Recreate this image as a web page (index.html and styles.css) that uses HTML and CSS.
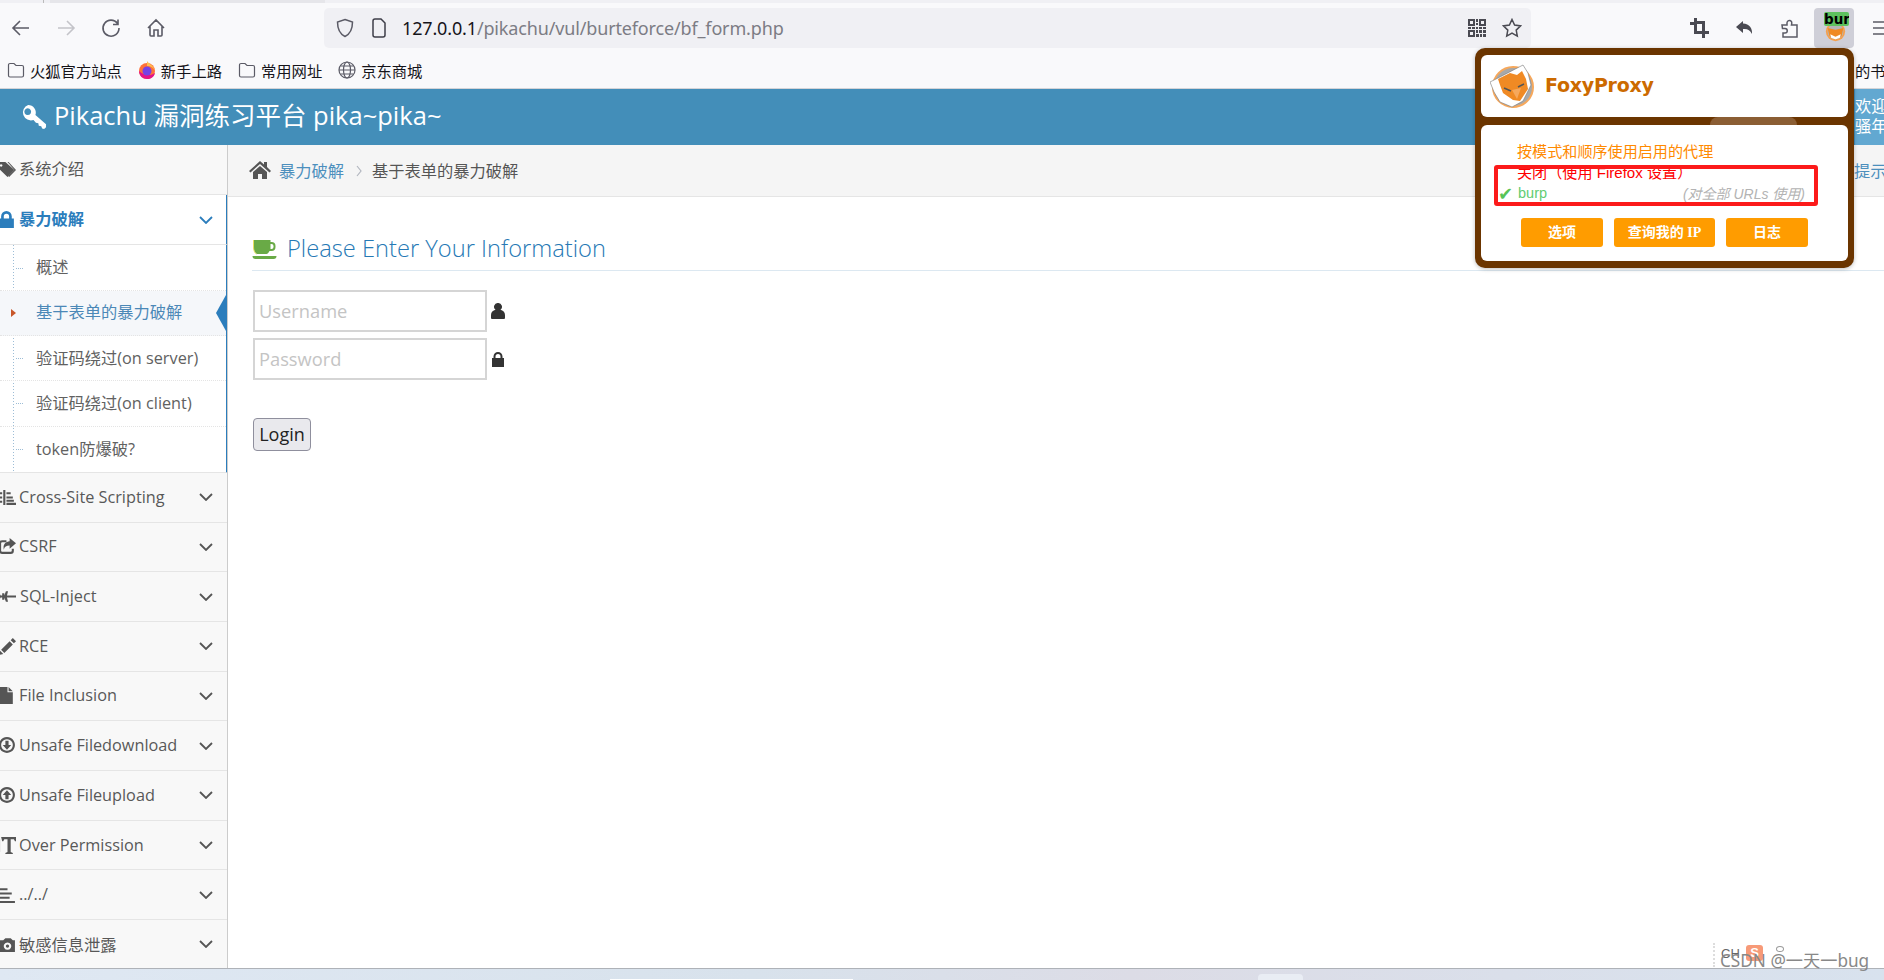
FILE: index.html
```html
<!DOCTYPE html>
<html lang="zh">
<head>
<meta charset="utf-8">
<title>Pikachu</title>
<link rel="stylesheet" href="styles.css">
</head>
<body>
<div class="page">
  <div class="tabstrip"><span class="tab-line"></span><span class="tab-shadow"></span></div>

  <div class="toolbar">
    <svg class="tb-icon" viewBox="0 0 20 20"><path d="M18 10H3M9 3l-7 7 7 7"/></svg>
    <svg class="tb-icon tb-disabled" viewBox="0 0 20 20"><path d="M2 10h15M11 3l7 7-7 7"/></svg>
    <svg class="tb-icon" viewBox="0 0 20 20"><path d="M16.500 5.500A8 8 0 1 0 18 10M17 1.500v5h-5"/></svg>
    <svg class="tb-icon" viewBox="0 0 20 20"><path d="M2 10l8-8 8 8M4 8v9a1 1 0 0 0 1 1h3v-6h4v6h3a1 1 0 0 0 1-1V8"/></svg>
    <div class="urlbar">
      <svg class="url-shield" viewBox="0 0 20 20"><path d="M10 1.500l7.500 2.500c0 7-1.500 11.500-7.500 14.500C4 15.500 2.500 11 2.500 4z"/></svg>
      <svg class="url-page" viewBox="0 0 20 20"><path d="M4 3a2 2 0 0 1 2-2h6l4 4v12a2 2 0 0 1-2 2H6a2 2 0 0 1-2-2z"/></svg>
      <span class="url-text"><b class="url-host">127.0.0.1</b>/pikachu/vul/burteforce/bf_form.php</span>
      <svg class="url-qr" viewBox="0 0 18 18"><path d="M0 0h7v7H0zM2 2v3h3V2zM11 0h7v7h-7zM13 2v3h3V2zM0 11h7v7H0zM2 13v3h3v-3zM8 0h2v3H8zM8 4h2v2H8zM0 8h3v2H0zM4 8h3v2H4zM8 8h2v2H8zM11 8h3v2h-3zM15 8h3v2h-3zM8 11h2v3H8zM11 11h3v3h-3zM15 11h3v3h-3zM8 15h3v3H8zM12 15h2v3h-2zM15 15h3v3h-3z"/></svg>
      <svg class="url-star" viewBox="0 0 20 20"><path d="M10 1.500l2.600 5.600 6 .8-4.400 4.200 1.100 6L10 15.200 4.700 18.100l1.100-6L1.400 7.900l6-.8z"/></svg>
    </div>
    <div class="tb-right">
      <svg class="tb-ext" viewBox="0 0 20 20"><path class="tb-solid" fill-rule="evenodd" d="M4 0h3v3h8v10h4v3h-4v4h-3v-4H4V7H0V4h4zM7 6v7h5V6z"/></svg>
      <svg class="tb-ext" viewBox="0 0 20 20"><path class="tb-solid" d="M8 3L1 9l7 6v-4c4-.5 7 .5 9 5 .5-6-2.500-10-9-10.500z"/></svg>
      <svg class="tb-ext tb-puzzle" viewBox="0 0 20 20"><path d="M2 7h5V5a2.500 2.500 0 0 1 3-2.500C12 3 12 5 11.500 7H17v12H3v-4h2a2.200 2.200 0 0 0 0-4.500H2.500z"/></svg>
      <div class="foxy-btn">
        <svg class="foxy-mini" viewBox="0 0 24 24"><circle cx="12" cy="12" r="11" fill="#f6a04d"/><circle cx="12" cy="12" r="9" fill="#b5b5b5"/><path d="M3 8l9 2 9-2-2 9-7 5-7-5z" fill="#f08a24"/><path d="M6 15l6 3 6-3-1 4-5 2-5-2z" fill="#fff"/></svg>
        <span class="foxy-badge">bur</span>
      </div>
      <svg class="tb-menu" viewBox="0 0 20 20"><path d="M1 4h18M1 10h18M1 16h18"/></svg>
    </div>
  </div>

  <div class="bookmarks">
    <span class="bm"><svg class="bm-icon" viewBox="0 0 18 18"><path d="M1.500 4a1.500 1.500 0 0 1 1.500-1.500h4l2 2h6A1.500 1.500 0 0 1 16.500 6v8.500A1.500 1.500 0 0 1 15 16H3a1.500 1.500 0 0 1-1.500-1.500z"/></svg>火狐官方站点</span>
    <span class="bm"><svg class="bm-icon bm-fx" viewBox="0 0 18 18"><circle cx="9" cy="10" r="8" fill="#ff7139"/><path d="M9 0c2 3 6 4 8 9-2-2-4-4-8-4z" fill="#ffbd4f"/><path d="M1 10c0 5 4 8 8 8s7-2 8-6c-4 3-11 3-16-2z" fill="#e31587"/><circle cx="9" cy="10" r="4.500" fill="#7542e5"/></svg>新手上路</span>
    <span class="bm"><svg class="bm-icon" viewBox="0 0 18 18"><path d="M1.500 4a1.500 1.500 0 0 1 1.500-1.500h4l2 2h6A1.500 1.500 0 0 1 16.500 6v8.500A1.500 1.500 0 0 1 15 16H3a1.500 1.500 0 0 1-1.500-1.500z"/></svg>常用网址</span>
    <span class="bm"><svg class="bm-icon" viewBox="0 0 18 18"><circle cx="9" cy="9" r="8"/><ellipse cx="9" cy="9" rx="3.500" ry="8"/><path d="M1 9h16M2.500 5h13M2.500 13h13"/></svg>京东商城</span>
    <span class="bm-other">的书签</span>
  </div>

  <header class="site-head">
    <svg class="head-key" viewBox="0 0 28 28"><path fill-rule="evenodd" d="M8.500 1a8 8 0 0 1 7.500 10.500L27 21v3l-2 2-2-.5-1-2.500-2.500-.5-.5-2.500-2.500-.5-2.500-3A8 8 0 1 1 8.500 1zM8 4.500a3.500 3.500 0 1 0 .01 0z"/></svg>
    <span class="head-title">Pikachu 漏洞练习平台 pika~pika~</span>
    <div class="head-user">欢迎光临<br>骚年</div>
  </header>

  <div class="main">
    <nav class="sidebar">
      <a class="nav-item nav-first"><svg class="nav-icon" viewBox="0 0 16 16"><path fill-rule="evenodd" d="M-1 1h7l8.500 7.500L8 15-1 6.500zM2 3a1.200 1.200 0 1 0 .01 0z"/><path d="M8 1h1l7 7.500L9.500 15l-.8-.8L14.500 8.500z"/></svg><span class="nav-label">系统介绍</span></a>
      <a class="nav-item nav-first nav-open"><svg class="nav-icon" viewBox="0 0 16 16"><path fill-rule="evenodd" d="M2 7V5a5 5 0 0 1 10 0v2h2v9H0V7zM4.500 7h5V5a2.500 2.500 0 0 0-5 0z"/></svg><span class="nav-label">暴力破解</span><svg class="chev" viewBox="0 0 14 8"><path d="M1 1l6 6 6-6"/></svg></a>
      <ul class="submenu">
        <li class="sub-item">概述</li>
        <li class="sub-item sub-active">基于表单的暴力破解</li>
        <li class="sub-item">验证码绕过(on server)</li>
        <li class="sub-item">验证码绕过(on client)</li>
        <li class="sub-item">token防爆破?</li>
      </ul>
      <a class="nav-item"><svg class="nav-icon" viewBox="0 0 16 16"><path d="M4 1h2v14H4zM0 3h3v2H0zM0 7h3v2H0zM0 11h3v2H0zM7 3h4v2H7zM7 7h6v2H7zM7 13h9v2H7zM7 10h7v2H7z"/></svg><span class="nav-label">Cross-Site Scripting</span><svg class="chev" viewBox="0 0 14 8"><path d="M1 1l6 6 6-6"/></svg></a>
      <a class="nav-item"><svg class="nav-icon" viewBox="0 0 16 16"><path d="M10 0l6 5-6 5V7C7 7 5 8 4.500 11 3.500 6 6 3.500 10 3zM0 5a3 3 0 0 1 3-3h4v2H3a1 1 0 0 0-1 1v7a1 1 0 0 0 1 1h8a1 1 0 0 0 1-1v-2h2v2a3 3 0 0 1-3 3H3a3 3 0 0 1-3-3z"/></svg><span class="nav-label">CSRF</span><svg class="chev" viewBox="0 0 14 8"><path d="M1 1l6 6 6-6"/></svg></a>
      <a class="nav-item nav-sql"><svg class="nav-icon" viewBox="0 0 16 16"><path d="M0 4l1.500 3H5L6.500 3H8.500l-1 4H16v2H7.500l1 4h-2L5 9H1.500L0 12zM3 5h2v6H3z"/></svg><span class="nav-label">SQL-Inject</span><svg class="chev" viewBox="0 0 14 8"><path d="M1 1l6 6 6-6"/></svg></a>
      <a class="nav-item"><svg class="nav-icon" viewBox="0 0 16 16"><path d="M13 0l3 3-2 2-3-3zM10 3l3 3-8 8-3-3zM1 12l3 3-4 1z"/></svg><span class="nav-label">RCE</span><svg class="chev" viewBox="0 0 14 8"><path d="M1 1l6 6 6-6"/></svg></a>
      <a class="nav-item"><svg class="nav-icon" viewBox="0 0 16 16"><path d="M0 0h8v5h5v11H0zM9 0l4 4H9z"/></svg><span class="nav-label">File Inclusion</span><svg class="chev" viewBox="0 0 14 8"><path d="M1 1l6 6 6-6"/></svg></a>
      <a class="nav-item"><svg class="nav-icon" viewBox="0 0 16 16"><path fill-rule="evenodd" d="M7.500 0a7.500 7.500 0 1 1-.01 0zM7.500 2a5.500 5.500 0 1 0 .01 0zM6 3.500h3v4h2.500l-4 4.500-4-4.500H6z"/></svg><span class="nav-label">Unsafe Filedownload</span><svg class="chev" viewBox="0 0 14 8"><path d="M1 1l6 6 6-6"/></svg></a>
      <a class="nav-item"><svg class="nav-icon" viewBox="0 0 16 16"><path fill-rule="evenodd" d="M7.500 0a7.500 7.500 0 1 1-.01 0zM7.500 2a5.500 5.500 0 1 0 .01 0zM6 11.500h3v-4h2.500L7.500 3l-4 4.500H6z"/></svg><span class="nav-label">Unsafe Fileupload</span><svg class="chev" viewBox="0 0 14 8"><path d="M1 1l6 6 6-6"/></svg></a>
      <a class="nav-item"><svg class="nav-icon" viewBox="0 0 16 16"><path d="M2 0h14v4h-1l-1-2h-3v12l2 1v1H6v-1l2-1V2H5L4 4H3zM0 2h1v12H0z"/></svg><span class="nav-label">Over Permission</span><svg class="chev" viewBox="0 0 14 8"><path d="M1 1l6 6 6-6"/></svg></a>
      <a class="nav-item"><svg class="nav-icon" viewBox="0 0 16 16"><path d="M0 2h8v2H0zM0 6h12v2H0zM0 10h10v2H0zM0 14h15v2H0z"/></svg><span class="nav-label">../../</span><svg class="chev" viewBox="0 0 14 8"><path d="M1 1l6 6 6-6"/></svg></a>
      <a class="nav-item"><svg class="nav-icon" viewBox="0 0 16 16"><path fill-rule="evenodd" d="M0 4h4l2-2h5l2 2h2v11H0zM8 6a3.500 3.500 0 1 0 .01 0zM8 8a1.500 1.500 0 1 1-.01 0z"/></svg><span class="nav-label">敏感信息泄露</span><svg class="chev" viewBox="0 0 14 8"><path d="M1 1l6 6 6-6"/></svg></a>
    </nav>

    <section class="content">
      <div class="breadcrumb">
        <svg class="crumb-home" viewBox="0 0 22 18"><path d="M11 0l4 3.500V1h3v5l4 4-1.500 1.500L11 3 1.500 11.500 0 10zM4 11l7-6 7 6v7h-5v-5H9v5H4z"/></svg>
        <a class="crumb-link">暴力破解</a>
        <svg class="crumb-sep" viewBox="0 0 6 12"><path d="M1 1l4 5-4 5"/></svg>
        <span class="crumb-current">基于表单的暴力破解</span>
        <span class="crumb-tip">提示</span>
      </div>
      <div class="form-area">
        <h4 class="form-title">
          <svg class="title-cup" viewBox="0 0 24 20"><path d="M1 0h17v2h1a4 4 0 0 1 4 4v1a4 4 0 0 1-4 4h-2c-1 2-2 3-3 3H5C3 14 1 11 1 7z" fill="#69aa46"/><path d="M18 4v5h1a2 2 0 0 0 2-2V6a2 2 0 0 0-2-2z" fill="#fff"/><path d="M0 16h24c0 2-1 3-3 3H3c-2 0-3-1-3-3z" fill="#69aa46"/><path d="M1 0v7c0 3 1 6 3 7" fill="none" stroke="#e8e060" stroke-width="1"/></svg>
          <span>Please Enter Your Information</span>
        </h4>
        <div class="field"><input class="text-input" type="text" placeholder="Username"><svg class="field-icon" viewBox="0 0 14 16"><path d="M7 0a3.800 3.800 0 0 1 2.500 6.800C12 7.500 14 9 14 12v3a1 1 0 0 1-1 1H1a1 1 0 0 1-1-1v-3c0-3 2-4.500 4.500-5.200A3.800 3.800 0 0 1 7 0z"/></svg></div>
        <div class="field"><input class="text-input" type="password" placeholder="Password"><svg class="field-icon field-lock" viewBox="0 0 12 15"><path fill-rule="evenodd" d="M1.500 6V4.500a4.500 4.500 0 0 1 9 0V6H12v9H0V6zM3.500 6h5V4.500a2.500 2.500 0 0 0-5 0z"/></svg></div>
        <button class="login-btn" type="button">Login</button>
      </div>
    </section>
  </div>

  <div class="taskbar"><span class="task-a"></span><span class="task-b"></span></div>

  <aside class="fp-popup">
    <div class="fp-top">
      <svg class="fp-logo" viewBox="0 0 46 46">
        <circle cx="23" cy="24" r="20" fill="#a8a8a8" stroke="#f6a85c" stroke-width="2"/>
        <path d="M0 19l8-4 25-13 5 8 3 12-8 16-11 6-12-5-6-10z" fill="#fff" stroke="#777" stroke-width=".6"/>
        <path d="M8 16l12-6 7 2 5-4 4 8 2 10-8 12-7-1-10-7-3-8z" fill="#f08a24"/>
        <path d="M14 25l7 3M28 24l6-3" stroke="#555" stroke-width="1.500"/>
        <path d="M22 27l5 9 4-11z" fill="#f6a85c"/>
      </svg>
      <span class="fp-name">FoxyProxy</span>
    </div>
    <div class="fp-body">
      <div class="fp-mode">按模式和顺序使用启用的代理</div>
      <div class="fp-off">关闭（使用 Firefox 设置）</div>
      <div class="fp-proxy"><span class="fp-check">✔</span><span class="fp-burp">burp</span><em class="fp-note">(对全部 URLs 使用)</em></div>
      <div class="fp-actions">
        <span class="fp-btn fp-btn-a">选项</span>
        <span class="fp-btn fp-btn-b">查询我的 IP</span>
        <span class="fp-btn fp-btn-a">日志</span>
      </div>
      <span class="fp-redbox"></span>
    </div>
    <span class="fp-ghost"></span>
  </aside>

  <div class="watermark">
    <span class="wm-dots"></span>
    <span class="wm-ch">CH</span>
    <span class="wm-logo">S</span>
    <span class="wm-ring"></span>
    <span class="wm-text">CSDN @一天一bug</span>
  </div>
</div>
</body>
</html>
```

FILE: styles.css
```css
* { box-sizing: border-box; }
html, body { margin: 0; padding: 0; height: 100%; overflow: hidden; background: #fff; }
body { font-family: "Open Sans", "Noto Sans CJK SC", sans-serif; font-size: 16.25px; color: #393939; }
ul { list-style: none; margin: 0; padding: 0; }
a { text-decoration: none; color: inherit; }
svg { display: block; flex: none; }

.page { position: relative; width: 1884px; height: 980px; display: flex; flex-direction: column; overflow: hidden; }

/* browser chrome */
.tabstrip { height: 3px; background: #f0f0f4; display: flex; flex: none; }
.tab-line { width: 1px; margin-left: 43px; background: #bbb; }
.tab-shadow { width: 275px; margin-left: 6px; background: #e6e6ea; }

.toolbar { height: 55px; flex: none; background: #f9f9fb; display: flex; align-items: center; padding: 0 0 6px 11px; }
.tb-icon { width: 20px; height: 20px; margin-right: 25px; fill: none; stroke: #5b5b66; stroke-width: 1.600; }
.tb-disabled { stroke: #c4c4c9; }
.urlbar { width: 1207px; height: 40px; margin-left: 133px; flex: none; background: #f0f0f4; border-radius: 5px; display: flex; align-items: center; padding: 0 9px 0 11px; }
.url-shield { width: 20px; height: 20px; fill: none; stroke: #5b5b66; stroke-width: 1.500; }
.url-page { width: 20px; height: 20px; margin-left: 14px; fill: none; stroke: #3e3e48; stroke-width: 1.500; }
.url-text { margin-left: 13px; font-family: "Noto Sans", sans-serif; font-size: 18px; color: #7c7c84; white-space: nowrap; letter-spacing: -.15px; }
.url-host { font-weight: 400; color: #15141a; }
.url-qr { width: 18px; height: 18px; margin-left: auto; fill: #4a4a52; }
.url-star { width: 20px; height: 20px; margin-left: 16px; fill: none; stroke: #4a4a52; stroke-width: 1.500; }
.tb-right { flex: none; display: flex; align-items: center; padding-left: 159px; }
.tb-ext { width: 20px; height: 20px; margin-right: 25px; fill: none; stroke: #5b5b66; stroke-width: 1.500; }
.tb-solid { fill: #4a4a52; stroke: none; }
.tb-puzzle { margin-right: 14px; }
.foxy-btn { position: relative; width: 40px; height: 40px; background: #cfcfd8; border-radius: 4px; flex: none; }
.foxy-mini { position: absolute; left: 11px; top: 13px; width: 21px; height: 21px; }
.foxy-badge { position: absolute; left: 10px; top: 4px; width: 25px; height: 14px; background: #5ec15e; border-radius: 2px; font: bold 13.500px/14px "DejaVu Sans", sans-serif; color: #000; text-align: center; overflow: hidden; }
.tb-menu { width: 20px; height: 20px; margin-left: 18px; fill: none; stroke: #5b5b66; stroke-width: 1.600; }

.bookmarks { height: 31px; flex: none; background: #f9f9fb; display: flex; align-items: center; padding: 0 0 7px 7px; font-family: "Noto Sans CJK SC", sans-serif; font-size: 15.300px; color: #15141a; white-space: nowrap; border-bottom: 1px solid #d4d4d8; }
.bm { display: flex; align-items: center; margin-right: 16px; }
.bm-icon { width: 18px; height: 18px; margin-right: 5px; fill: none; stroke: #5b5b66; stroke-width: 1.200; }
.bm-fx { stroke: none; }
.bm-other { margin-left: auto; width: 29px; overflow: hidden; }

.site-head { height: 56px; flex: none; background: #438eb9; color: #fff; display: flex; align-items: center; padding-left: 20px; }
.head-key { width: 27px; height: 27px; fill: #fff; }
.head-title { margin-left: 7px; font-size: 25.500px; line-height: 30px; padding-bottom: 4px; white-space: nowrap; }
.head-user { margin-left: auto; width: 29px; height: 56px; background: #62a8d1; font-size: 16.250px; line-height: 20px; padding-top: 7px; white-space: nowrap; overflow: hidden; flex: none; }

.main { flex: 1; display: flex; min-height: 0; }

/* sidebar */
.sidebar { width: 228px; flex: none; background: #f8f8f8; border-right: 1px solid #ccc; display: flex; flex-direction: column; overflow: hidden; }
.nav-item { height: 49.700px; flex: none; display: flex; align-items: center; padding-right: 15px; border-bottom: 1px solid #e5e5e5; color: #585858; }
.nav-first { height: 50.200px; }
.nav-icon { width: 17px; height: 17px; margin-left: -1px; margin-right: 3px; fill: #555; }
.nav-label { flex: 1; white-space: nowrap; padding-bottom: 1px; }
.nav-first .nav-label { padding-bottom: 3px; }
.nav-sql .nav-label { padding-left: 1px; }
.chev { width: 14px; height: 8px; fill: none; stroke: #555; stroke-width: 1.800; margin-right: -1px; }
.nav-open { background: #fff; color: #2b7dbc; font-weight: 700; margin-right: -1px; border-right: 2px solid #2b7dbc; padding-right: 14px; }
.nav-open .nav-icon { fill: #2b7dbc; }
.nav-open .chev { stroke: #2b7dbc; }

.submenu { flex: none; background: #fff; margin-right: -1px; border-right: 2px solid #2b7dbc; border-bottom: 1px solid #e5e5e5; background-image: linear-gradient(#9dbdd6 50%, transparent 50%); background-size: 1px 3px; background-position: 13px 0; background-repeat: repeat-y; }
.sub-item { position: relative; height: 45.300px; display: flex; align-items: center; padding: 0 0 3px 36px; color: #616161; border-bottom: 1px dotted #e4e4e4; white-space: nowrap; }
.sub-item:last-child { border-bottom: 0; }
.sub-item::before { content: ""; position: absolute; left: 16px; top: 50%; width: 7px; border-top: 1px dotted #9dbdd6; }
.sub-active { color: #4b88b7; background: #f5f7fa; }
.sub-active::before { left: 11px; top: calc(50% - 4px); width: 0; height: 0; border-top: 4px solid transparent; border-bottom: 4px solid transparent; border-left: 5px solid #c8572a; }
.sub-active::after { content: ""; position: absolute; right: 0; top: 4px; border-top: 18px solid transparent; border-bottom: 18px solid transparent; border-right: 10px solid #2b7dbc; }

/* content */
.content { flex: 1; min-width: 0; display: flex; flex-direction: column; }
.breadcrumb { height: 52px; flex: none; background: #f5f5f5; border-bottom: 1px solid #e5e5e5; display: flex; align-items: center; padding: 0 0 2px 21px; }
.crumb-home { width: 22px; height: 18px; fill: #555; }
.crumb-link { margin-left: 8px; color: #4c8fbd; white-space: nowrap; }
.crumb-sep { width: 6px; height: 12px; margin: 2px 10px 0 12px; fill: none; stroke: #b2b6bf; stroke-width: 1.200; }
.crumb-current { color: #555; white-space: nowrap; }
.crumb-tip { margin-left: auto; width: 30px; overflow: hidden; color: #4c8fbd; white-space: nowrap; flex: none; }

.form-area { flex: 1; padding: 33px 0 0 25px; }
.form-title { margin: 0 0 19px; height: 41px; display: flex; align-items: center; gap: 10px; border-bottom: 1px solid #dce8f1; font-size: 23.700px; font-weight: 300; color: #2679b5; white-space: nowrap; padding-bottom: 5px; margin-left: -1px; }
.title-cup { width: 25px; height: 20px; margin-top: 4px; }
.field { display: flex; align-items: center; height: 42px; margin-bottom: 6px; }
.text-input { width: 234px; height: 42px; border: 2px solid #d5d5d5; background: #fff; padding: 0 4px 2px; font-family: "Open Sans", sans-serif; font-size: 18.300px; color: #393939; outline: 0; }
.text-input::placeholder { color: #c4c4c4; opacity: 1; }
.field-icon { width: 14px; height: 16px; margin-left: 4px; fill: #333; }
.field-lock { width: 12px; height: 15px; margin-left: 5px; }
.login-btn { display: block; margin-top: 38px; width: 58px; height: 33px; padding: 0 0 1px; background: #e9e9ed; border: 1px solid #8f8f9d; border-radius: 4px; font-family: "Open Sans", sans-serif; font-size: 18px; color: #222; }

.taskbar { height: 12px; flex: none; background: linear-gradient(90deg, #dfe8f3, #d8e2ec 40%, #dcdce6 60%, #d8e2ee); border-top: 1px solid #aeb2b8; display: flex; align-items: flex-end; padding-left: 610px; }
.task-a { width: 243px; height: 1px; background: #fff; }
.task-b { width: 45px; height: 6px; margin-left: 405px; background: #e9edf4; border-radius: 4px 4px 0 0; }

/* FoxyProxy popup, floating over the page */
.fp-popup { position: absolute; left: 1475px; top: 48px; width: 379px; height: 220px; background: #6b3500; border-radius: 10px; padding: 7px 6px; display: flex; flex-direction: column; gap: 8px; box-shadow: 0 1px 4px rgba(0,0,0,.25); overflow: hidden; }
.fp-top { height: 62px; flex: none; background: #fff; border-radius: 6px; display: flex; align-items: center; padding-left: 9px; }
.fp-logo { width: 46px; height: 46px; }
.fp-name { margin-left: 9px; font: bold 19px "DejaVu Sans", sans-serif; line-height: 24px; padding-bottom: 2px; color: #cc6a00; letter-spacing: -.25px; }
.fp-body { position: relative; flex: 1; background: #fff; border-radius: 6px; font-family: "Liberation Sans", "Noto Sans CJK SC", sans-serif; font-size: 15.100px; padding: 16px 0 0 36px; }
.fp-mode { color: #ff8a00; height: 22px; line-height: 21px; }
.fp-off { color: #f00; height: 20px; line-height: 20px; }
.fp-proxy { position: relative; display: flex; align-items: center; height: 20px; padding-right: 43px; }
.fp-check { position: absolute; left: -19px; color: #58c458; font: bold 18px "DejaVu Sans", sans-serif; }
.fp-burp { color: #62cc72; font-size: 14.500px; margin-left: 1px; }
.fp-note { margin-left: auto; color: #b3b3b3; font-size: 14px; }
.fp-actions { display: flex; gap: 11px; margin: 15px 0 0 4px; }
.fp-btn { height: 29px; background: #ff9c00; border-radius: 3px; color: #fff; font: bold 14px/29px "Liberation Serif", "Noto Sans CJK SC", serif; text-align: center; }
.fp-btn-a { width: 82px; }
.fp-btn-b { width: 101px; }
.fp-redbox { position: absolute; left: 13px; top: 40px; width: 324px; height: 41px; border: 4px solid #fc1a1a; border-radius: 3px; }
.fp-ghost { position: absolute; left: 235px; top: 69px; width: 87px; height: 8px; background: #8b5e34; border-radius: 40px 40px 0 0; }

/* watermark */
.watermark { position: absolute; left: 1712px; top: 940px; width: 170px; height: 30px; color: #777; }
.wm-dots { position: absolute; left: 1px; top: 3px; height: 24px; border-left: 2px dotted #ddd; }
.wm-ch { position: absolute; left: 9px; top: 7px; font: 13px/14px "Liberation Sans", sans-serif; color: #666; }
.wm-logo { position: absolute; left: 34px; top: 5px; width: 17px; height: 16px; background: #f79a78; color: #fff; font: bold 13px/16px "Liberation Sans", sans-serif; text-align: center; border-radius: 3px; }
.wm-ring { position: absolute; left: 64px; top: 6px; width: 8px; height: 6px; border: 1px solid #999; border-radius: 50%; }
.wm-text { position: absolute; left: 8px; top: 10px; font-family: "Noto Sans", "Noto Sans CJK SC", sans-serif; font-size: 17.200px; line-height: 22px; color: #888; white-space: nowrap; }
```
